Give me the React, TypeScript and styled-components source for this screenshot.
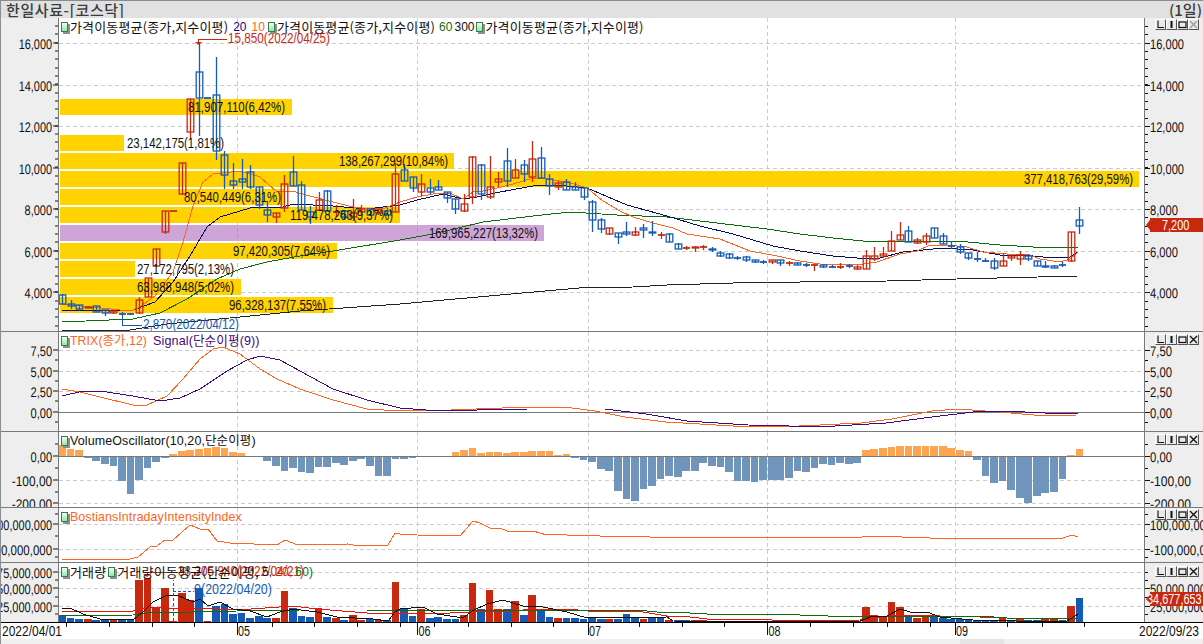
import React from 'react';
import styled, { createGlobalStyle } from 'styled-components';

const RED = '#c8290e';
const BLUE = '#155bb5';
const FIRST_X = 62;
const STEP = 8.55;
const MONTHS = [237, 417.5, 588, 767.5, 955];
const cx = (i: number) => FIRST_X + i * STEP;

// candle data is in page pixels: body top, body bottom, wick top, wick bottom, 1 = red
type Candle = [number, number, number, number, number];
const CANDLES: Candle[] = [
  [296, 305, 295, 305, 0], [305, 307, 301, 310, 0], [306, 310, 306, 312, 0], [308, 309, 308, 309, 1], [307, 313, 307, 313, 0],
  [311, 314, 311, 317, 0], [312, 314, 312, 315, 1], [315, 315, 313, 317, 0], [315, 315, 314, 316, 0], [301, 314, 298, 315, 1],
  [279, 298, 279, 298, 1], [250, 267, 250, 268, 1], [212, 233, 212, 235, 1], [212, 212, 212, 212, 1], [164, 195, 164, 196, 1],
  [100, 133, 100, 140, 1], [73, 99, 44, 137, 0], [99, 99, 99, 99, 0], [96, 152, 58, 161, 0], [156, 176, 152, 190, 0],
  [182, 186, 164, 190, 0], [180, 183, 160, 190, 0], [173, 188, 166, 190, 0], [188, 206, 188, 210, 0], [211, 216, 202, 223, 0],
  [214, 218, 214, 224, 1], [185, 209, 176, 213, 1], [173, 187, 157, 187, 0], [186, 211, 182, 211, 0], [213, 218, 207, 225, 0],
  [201, 211, 193, 211, 1], [192, 212, 191, 212, 0], [213, 213, 206, 218, 1], [212, 218, 212, 220, 0], [214, 218, 200, 222, 1],
  [210, 213, 206, 216, 1], [210, 216, 210, 216, 0], [210, 214, 210, 216, 1], [212, 216, 209, 216, 0], [175, 213, 164, 213, 1],
  [171, 182, 165, 182, 0], [178, 189, 178, 193, 0], [185, 193, 175, 197, 1], [189, 193, 180, 195, 0], [188, 191, 181, 191, 0],
  [193, 199, 193, 204, 0], [200, 210, 200, 215, 0], [205, 212, 195, 213, 1], [158, 198, 157, 205, 1], [166, 195, 165, 201, 0],
  [188, 198, 157, 200, 1], [180, 183, 173, 188, 1], [162, 182, 149, 188, 0], [171, 179, 160, 179, 1], [166, 175, 161, 183, 0],
  [160, 178, 142, 183, 1], [159, 179, 148, 179, 0], [180, 187, 175, 196, 0], [184, 188, 182, 191, 1], [183, 191, 180, 191, 0],
  [188, 191, 183, 191, 0], [189, 198, 189, 201, 0], [203, 221, 201, 233, 0], [221, 230, 219, 234, 0], [229, 235, 229, 236, 1],
  [234, 238, 234, 245, 0], [233, 235, 223, 237, 0], [233, 236, 228, 237, 1], [229, 231, 225, 239, 0], [233, 234, 222, 237, 0],
  [236, 236, 233, 240, 1], [235, 243, 234, 243, 0], [245, 250, 244, 250, 0], [249, 249, 247, 251, 1], [248, 249, 247, 253, 1],
  [248, 248, 246, 251, 1], [250, 251, 248, 253, 0], [254, 257, 252, 258, 0], [255, 259, 254, 260, 0], [259, 259, 257, 261, 0],
  [258, 261, 257, 263, 0], [261, 263, 261, 264, 0], [263, 263, 261, 265, 0], [261, 263, 261, 265, 1], [261, 264, 261, 267, 0],
  [264, 264, 262, 267, 1], [264, 266, 263, 266, 0], [266, 266, 264, 268, 0], [266, 266, 266, 272, 1], [266, 268, 266, 269, 0],
  [268, 268, 266, 269, 0], [268, 268, 264, 270, 1], [267, 267, 265, 269, 0], [268, 270, 266, 271, 1], [257, 270, 251, 270, 1],
  [257, 260, 248, 262, 1], [255, 257, 248, 259, 1], [242, 252, 232, 252, 1], [236, 241, 223, 241, 1], [232, 243, 227, 243, 0],
  [241, 244, 239, 245, 1], [237, 243, 234, 246, 1], [229, 239, 229, 239, 0], [237, 245, 234, 245, 0], [247, 247, 242, 250, 0],
  [248, 253, 245, 255, 0], [254, 259, 254, 261, 0], [260, 260, 253, 263, 0], [262, 262, 259, 263, 0], [262, 269, 259, 271, 0],
  [262, 267, 254, 267, 1], [257, 259, 257, 262, 1], [256, 260, 252, 266, 1], [257, 260, 255, 262, 0], [262, 267, 262, 267, 0],
  [267, 268, 262, 269, 0], [267, 269, 266, 269, 0], [266, 266, 262, 268, 0], [233, 262, 233, 263, 1], [221, 227, 208, 235, 0],
];

const MA5 = '62,305 130,312 138,309 155,297 173,273 183,243 193,207 203,183 213,175 240,172 260,178 277,193 292,192 310,197 333,203 353,208 380,211 395,205 400,203 417,198 433,195 450,194 463,200 473,193 483,192 497,189 513,185 533,179 547,180 567,183 587,189 603,202 620,212 633,218 653,224 673,229 687,235 720,240 750,252 777,257 800,262 820,265 857,266 877,263 900,255 917,252 930,246 947,246 967,248 983,253 1007,255 1027,255 1040,260 1060,263 1070,260 1078,253';
const MA20 = '62,311 133,311 155,303 173,283 190,257 207,228 220,218 240,212 250,209 283,208 293,205 333,207 367,210 400,206 417,201 443,195 463,200 477,198 500,193 533,187 557,186 587,189 627,206 667,217 700,227 733,235 773,247 800,252 833,257 857,259 880,259 903,253 943,249 973,251 1000,256 1033,257 1053,259 1070,258 1078,253';
const MA60 = '62,323 133,320 160,314 187,300 217,280 240,270 267,263 300,257 333,252 400,241 433,235 483,223 533,217 570,213 617,216 667,218 717,224 767,230 800,235 833,239 863,242 957,242 1000,246 1050,249 1078,248';
const MA300 = '62,331 130,331 167,325 240,318 300,312 400,305 500,296 579,289 633,288 667,286 767,283 800,283 887,282 957,280 1078,277';

const TRIX = '62,390 80,393 100,398 133,406 147,406 167,397 183,380 200,360 213,350 223,348 240,355 260,370 277,380 300,390 333,401 367,410 400,412 451,411 528,408 564,408 595,412 625,418 666,423 733,427 799,427 861,424 892,420 932,412 958,410 999,413 1045,417 1076,416';
const SIGNAL = '62,397 83,392 100,392 133,397 160,402 180,399 200,390 227,372 247,361 260,357 280,361 300,372 333,390 367,401 400,409 426,411 477,411 528,410 605,410 646,415 687,422 748,426 789,427 835,427 886,424 932,418 973,413 1004,412 1045,414 1078,415';
const BII = '62,560 130,560 138,558 150,548 157,547 165,541 173,541 190,526 200,530 208,530 217,542 230,544 277,546 285,541 298,546 348,545 353,546 388,546 395,534 400,535 417,536 460,537 473,522 480,524 490,529 500,529 507,532 527,533 533,532 547,536 560,535 567,536 597,536 600,537 647,537 650,538 862,538 863,537 897,537 907,539 922,538 930,539 1063,539 1072,536 1078,538';
const VOL_BLACK = '62,609 70,609 83,615 100,620 133,621 143,613 153,603 167,596 177,596 193,603 200,600 208,607 220,603 233,610 250,612 267,618 280,613 293,610 317,613 337,618 373,620 388,622 395,613 400,610 423,608 437,615 457,618 463,619 472,612 487,605 503,601 523,607 543,608 567,613 587,619 667,618 673,622 800,623 860,622 870,618 887,617 900,610 910,613 927,613 940,618 973,621 1060,623 1067,622 1078,615';
const VOL_RED = '62,612 133,612 137,610 160,608 177,610 200,609 237,611 293,607 317,610 367,614 400,614 450,614 473,613 510,612 537,610 567,610 588,612 637,612 667,617 690,618 707,620 767,620 777,622 860,621 880,618 900,616 980,618 1007,619 1060,620 1078,619';
const VOL_GREEN = '62,617 133,616 147,614 237,612 300,611 367,611 370,612 587,611 647,612 657,613 690,614 707,615 777,615 800,616 828,617 980,617 1007,619 1078,619';

const OSC = [10.7, 7.3, 6.3, -1.5, -4.5, -7.5, -9.5, -25, -37.5, -23.5, -11.5, -5.5, -1.5, 2.3, 5.5, 6.3, 7.3, 8.3, 9.3, 8.3, 4.3, 3.3, -1, 0, -4.5, -10, -14.5, -11.5, -15.5, -16.5, -10.5, -10.5, -6.5, -8.5, -4.5, -2.5, -9.5, -19.5, -19.5, -2.5,
  -2.5, -1.5, 0, 0, 0, 0, 4.3, 6.3, 8.3, 3.3, 4.3, 4.3, 3.3, 4.3, 4.3, 5.3, 5.3, 5.3, 1.3, 2.3, -1.5, -3.5, -5.5, -12.5, -14.5, -34.5, -42.5, -44.5, -32.5, -29.5,
  -22.5, -19.5, -20.5, -14.5, -14.5, -6.5, -9.5, -10.5, -15.5, -24.5, -24.5, -25.5, -23.5, -23.5, -23.5, -21.5, -14.5, -15.5, -11.5, -7.5, -8.5, -6.5, -7.5, -6.5, 6.3, 7.3, 8.3, 9.3, 10.3, 10.3,
  10.3, 10.3, 10.3, 10.3, 8.3, 6.3, 5.3, -3.5, -19.5, -26.5, -24.5, -33.5, -41.5, -46.5, -39.5, -36.5, -35.5, -22.5, 1.3, 7.3];

const VOL = [-7.3, -4.3, -3.3, 3.3, -2.3, -2.6, 2.3, -2.3, -2.3, 42.3, 44.3, 14.3, 34.3, 1.3, 29.3, 22.3, -34.3, 1.3, -16.3, -18.3, -8.3, -9.3, -4.3, -6.3, -4.3, 4.3, 31.3, -14.3, -6.3, -5.3, 14.3, -5.3, 4.3, -2.3, 7.3, 2.3, -3.3, 2.3, -2.3, 40.3,
  -13.3, -6.3, 13.3, -4.3, -5.3, -3.3, -3.3, 7.3, 39.3, -13.3, 32.3, 13.3, -13.3, 21.3, -7.3, 27.3, -12.3, -5.3, 4.3, -4.3, -4.3, -3.3, -5.3, -3.3, 3.3, -3.3, -8.3, -4.3, 3.3, -4.3,
  -4.3, 2.3, -2.3, -2.3, 2.3, 1.6, -1.5, 1, 1, -1, -1, -1, -1, -1.5, 1.5, 1.5, 1.5, -1, 1.5, 1, 1.5, 1, 1.5, 1, 15.3, 7.3, 6.3, 20.3, 15.3, -6.3,
  4.3, 6.3, -6.3, -4.3, -3.3, -3.3, -3.3, -2.3, -2.3, -2.3, 4.3, -2.3, 4.3, -2.3, -2.3, 4.3, 4.3, -2.3, 16.3, -24.3];

const VOLUME_ROWS = [
  { y: 100, end: 292, text: '81,907,110(6,42%)', x: 188 },
  { y: 136, end: 124, text: '23,142,175(1,81%)', x: 127 },
  { y: 154, end: 454, text: '138,267,299(10,84%)', x: 339 },
  { y: 172, end: 1139, text: '377,418,763(29,59%)', x: 1024 },
  { y: 190, end: 284, text: '80,540,449(6,31%)', x: 184 },
  { y: 208, end: 400, text: '119,478,263(9,37%)', x: 290 },
  { y: 226, end: 544, text: '169,965,227(13,32%)', x: 429, peak: true },
  { y: 244, end: 337, text: '97,420,305(7,64%)', x: 233 },
  { y: 262, end: 135, text: '27,172,795(2,13%)', x: 137 },
  { y: 280, end: 241, text: '63,988,948(5,02%)', x: 137 },
  { y: 298, end: 333, text: '96,328,137(7,55%)', x: 229 },
];

// width of a string in the bitmap font of the original chart
const textWidth = (s: string) =>
  [...s].reduce((w, c) => w + (c === ',' || c === '.' ? 4 : c === '(' || c === ')' ? 4 : c === '%' ? 11 : c === '-' ? 7 : 6), 0);

const GlobalStyle = createGlobalStyle`
  html, body { margin: 0; padding: 0; background: #eeeeee; overflow: hidden; }
  #root { width: 1203px; height: 644px; }
`;

const Screen = styled.div`
  width: 1203px;
  height: 644px;
  display: flex;
  flex-direction: column;
  box-sizing: border-box;
  border-left: 1px solid #8a8f94;
  font-family: 'Liberation Sans', 'Noto Sans CJK KR', sans-serif;
  overflow: hidden;
`;

const TitleBar = styled.div`
  height: 18px;
  flex: none;
  box-sizing: border-box;
  border-top: 1px solid #858c93;
  background: #e1e1e1;
  display: flex;
  align-items: center;
  justify-content: space-between;
  padding: 0 1px 0 6px;
  margin-left: -1px;
  color: #3c3c3c;
  font-family: 'Noto Sans CJK KR', sans-serif;
  font-size: 15px;
  font-weight: 500;
  line-height: 17px;
`;

const TitleText = styled.span`
  letter-spacing: 0.6px;
`;

const Pane = styled.div<{ $h: number; $line?: boolean }>`
  height: ${p => p.$h}px;
  flex: none;
  display: flex;
  box-sizing: content-box;
  border-bottom: ${p => (p.$line === false ? 'none' : '1px solid #76797c')};
`;

const SideAxis = styled.div<{ $w: number }>`
  position: relative;
  width: ${p => p.$w}px;
  flex: none;
  background: #eeeeee;
  overflow: hidden;
`;

const Plot = styled.div`
  position: relative;
  width: 1085px;
  flex: none;
  background: #ffffff;
  border-left: 1px solid #76797c;
  border-right: 1px solid #76797c;
  overflow: hidden;
`;

const ChartSvg = styled.svg`
  display: block;
  width: 100%;
  height: 100%;
`;

const AxisLabel = styled.text`
  font-family: 'Liberation Sans', sans-serif;
  font-size: 14px;
  fill: #111111;
`;

const Note = styled.text<{ $color: string }>`
  font-family: 'Liberation Sans', sans-serif;
  font-size: 14px;
  fill: ${p => p.$color};
`;

const Legend = styled.div`
  position: absolute;
  top: 2px;
  left: 1px;
  display: flex;
  align-items: center;
  height: 14px;
  white-space: nowrap;
  font-family: 'Noto Sans CJK KR', sans-serif;
  font-size: 13px;
  line-height: 14px;
`;

const LegendMark = styled.span<{ $gap?: number }>`
  width: 5px;
  height: 8px;
  flex: none;
  margin: 0 2px 0 ${p => (p.$gap ?? 0) + 1}px;
  border: 1px solid #3d7a52;
  background: linear-gradient(180deg, #f1fff1, #8fe8a8);
  box-shadow: 2px 2px 0 #8f8f8f;
`;

const LegendText = styled.span<{ $color?: string; $gap?: number; $track?: number; $size?: number; $latin?: boolean }>`
  color: ${p => p.$color ?? '#111111'};
  margin-left: ${p => p.$gap ?? 0}px;
  letter-spacing: ${p => p.$track ?? 0.15}px;
  font-size: ${p => p.$size ?? 13}px;
  ${p => p.$latin && `font-family: 'Liberation Sans', 'Noto Sans CJK KR', sans-serif;`}
`;

const ButtonRow = styled.div<{ $top: number }>`
  position: absolute;
  top: ${p => p.$top}px;
  right: 4px;
  display: flex;
`;

const PaneButton = styled.span`
  width: 11px;
  height: 11px;
  box-sizing: border-box;
  border: 1px solid;
  border-color: #ffffff #555555 #555555 #ffffff;
  background: #e9e9e9;
  display: flex;
  align-items: center;
  justify-content: center;
`;

const Glyph = styled.svg`
  display: block;
  width: 9px;
  height: 9px;
`;

const PriceTag = styled.div<{ $top: number }>`
  position: absolute;
  left: 5px;
  top: ${p => p.$top}px;
  width: 53px;
  height: 14px;
  background: ${RED};
  color: #ffffff;
  font-size: 14px;
  line-height: 14px;
  white-space: nowrap;
  padding-left: 2px;
  box-sizing: border-box;

  &::before {
    content: '';
    position: absolute;
    left: -4px;
    top: 2px;
    border-style: solid;
    border-width: 5px 4px 5px 0;
    border-color: transparent ${RED} transparent transparent;
  }
`;

const TagValue = styled.span<{ $inset: number }>`
  position: relative;
  display: inline-block;
  margin-left: ${p => p.$inset}px;
  transform: scaleX(0.78);
  transform-origin: left center;
`;

const Footer = styled.div`
  height: 16px;
  flex: none;
  background: #ffffff;
  border-top: 1px solid #000000;
  margin-left: -1px;
`;

const ScrollStrip = styled.div`
  height: 4px;
  flex: 1;
  background: #f0f0f0;
  margin-left: -1px;
  padding-left: 960px;
`;

const ScrollThumb = styled.div`
  width: 44px;
  height: 100%;
  background: #e4e4e4;
`;

function PaneButtons({ top, dim }: { top: number; dim?: boolean }) {
  const stroke = '#111';
  return (
    <ButtonRow $top={top}>
      <PaneButton>
        <Glyph viewBox="0 0 9 9"><path d="M2 0.5V7.5H8" fill="none" stroke={stroke} strokeWidth="1.1" /></Glyph>
      </PaneButton>
      <PaneButton>
        <Glyph viewBox="0 0 9 9"><path d="M4.5 1V8" fill="none" stroke={stroke} strokeWidth="2" /></Glyph>
      </PaneButton>
      <PaneButton>
        <Glyph viewBox="0 0 9 9"><rect x="1" y="2" width="7" height="5.5" fill="none" stroke={stroke} strokeWidth="1.2" /></Glyph>
      </PaneButton>
      <PaneButton>
        <Glyph viewBox="0 0 9 9"><path d="M1 1L8 8M8 1L1 8" fill="none" stroke={dim ? '#9a9a9a' : stroke} strokeWidth="1.3" /></Glyph>
      </PaneButton>
    </ButtonRow>
  );
}

function Axis({ side, top, h, labels, minor }: { side: 'left' | 'right'; top: number; h: number; labels: [number, string][]; minor: number[] }) {
  const left = side === 'left';
  const w = 58;
  const edge = left ? w : 0;
  const dir = left ? -1 : 1;
  return (
    <ChartSvg viewBox={`0 ${top} ${w} ${h}`} preserveAspectRatio="none" shapeRendering="crispEdges">
      {minor.map(y => <line key={y} x1={edge} x2={edge + dir * 3} y1={y} y2={y} stroke="#111" />)}
      {labels.map(([y, t]) => (
        <g key={y}>
          <line x1={edge} x2={edge + dir * 5} y1={y} y2={y} stroke="#111" />
          <AxisLabel
            x={left ? 52 : 5}
            y={y + 5.5}
            textAnchor={left ? 'end' : 'start'}
            textLength={textWidth(t)}
            lengthAdjust="spacingAndGlyphs"
            textRendering="geometricPrecision"
          >
            {t}
          </AxisLabel>
        </g>
      ))}
    </ChartSvg>
  );
}

function Grid({ top, bottom, rows, color = '#cccccc' }: { top: number; bottom: number; rows: number[]; color?: string }) {
  return (
    <g stroke={color} strokeDasharray="4 3" shapeRendering="crispEdges">
      {rows.map(y => <line key={y} x1={59} x2={1144} y1={y} y2={y} />)}
      {MONTHS.map(x => <line key={x} x1={x} x2={x} y1={top} y2={bottom} />)}
    </g>
  );
}

const Curve = ({ points, color }: { points: string; color: string }) => (
  <polyline points={points} fill="none" stroke={color} strokeWidth={1} shapeRendering="crispEdges" />
);

function PriceChart() {
  const rows = [44, 86, 127, 169, 210, 252, 293];
  const plain = VOLUME_ROWS.filter(r => !r.peak);
  const peak = VOLUME_ROWS.filter(r => r.peak);
  return (
    <ChartSvg viewBox="59 19 1085 313" preserveAspectRatio="none">
      <defs>
        <clipPath id="yellow-rows">
          {plain.map(r => <rect key={r.y} x={60} y={r.y} width={r.end - 60} height={16} />)}
        </clipPath>
        <clipPath id="purple-rows">
          {peak.map(r => <rect key={r.y} x={60} y={r.y} width={r.end - 60} height={16} />)}
        </clipPath>
      </defs>
      {VOLUME_ROWS.map(r => (
        <rect key={r.y} x={60} y={r.y} width={r.end - 60} height={16} fill={r.peak ? '#cda5d6' : '#ffd200'} />
      ))}
      <Grid top={19} bottom={332} rows={rows} />
      <g clipPath="url(#yellow-rows)"><Grid top={19} bottom={332} rows={rows} color="#c6ee2a" /></g>
      <g clipPath="url(#purple-rows)"><Grid top={19} bottom={332} rows={rows} color="#f070e0" /></g>
      <Curve points={MA300} color="#222222" />
      <Curve points={MA60} color="#0b6e0b" />
      <Curve points={MA20} color="#0c0c5c" />
      <Curve points={MA5} color="#ff6420" />
      {CANDLES.map(([t, b, wt, wb, red], i) => {
        const x = Math.round(cx(i)) + 0.5;
        const c = red ? RED : BLUE;
        return (
          <g key={i} stroke={c} strokeWidth="1.3" fill="none">
            <line x1={x} x2={x} y1={wt} y2={wb} />
            {t === b
              ? <line x1={x - 3.5} x2={x + 3.5} y1={t} y2={t} strokeWidth="1.8" />
              : <rect x={x - 3.3} y={t} width={6.6} height={b - t} />}
          </g>
        );
      })}
      <path d="M195 43 H202 L198.5 46 Z" fill={RED} />
      <path d="M198.5 44 V40.5 H227" fill="none" stroke={RED} shapeRendering="crispEdges" />
      <Note $color={RED} x={228} y={44} textLength={102} lengthAdjust="spacingAndGlyphs">15,850(2022/04/25)</Note>
      <path d="M122.5 317 V326.5 H142" fill="none" stroke={BLUE} shapeRendering="crispEdges" />
      <Note $color={BLUE} x={143} y={330} textLength={96} lengthAdjust="spacingAndGlyphs">2,870(2022/04/12)</Note>
      {VOLUME_ROWS.map(r => (
        <AxisLabel key={r.y} x={r.x} y={r.y + 13} textLength={textWidth(r.text)} lengthAdjust="spacingAndGlyphs">{r.text}</AxisLabel>
      ))}
    </ChartSvg>
  );
}

function TrixChart() {
  return (
    <ChartSvg viewBox="59 333 1085 99" preserveAspectRatio="none">
      <Grid top={333} bottom={432} rows={[351, 372, 392]} />
      <line x1={59} x2={1144} y1={413.5} y2={413.5} stroke="#76797c" strokeWidth="1" />
      <Curve points={TRIX} color="#ff6420" />
      <Curve points={SIGNAL} color="#3f0a7a" />
    </ChartSvg>
  );
}

function OscillatorChart() {
  return (
    <ChartSvg viewBox="59 433 1085 75" preserveAspectRatio="none" shapeRendering="crispEdges">
      <Grid top={433} bottom={508} rows={[481, 504]} />
      {OSC.map((v, i) => (
        <rect key={i} x={cx(i) - 3.8} y={v > 0 ? 457 - v : 457} width={7.7} height={Math.abs(v)} fill={v > 0 ? '#ffa552' : '#7095bd'} />
      ))}
      <line x1={59} x2={1144} y1={457.5} y2={457.5} stroke="#76797c" />
    </ChartSvg>
  );
}

function IntensityChart() {
  return (
    <ChartSvg viewBox="59 509 1085 54" preserveAspectRatio="none">
      <Grid top={509} bottom={563} rows={[525, 550]} />
      <Curve points={BII} color="#ff6420" />
    </ChartSvg>
  );
}

function VolumeChart() {
  return (
    <ChartSvg viewBox="59 564 1085 59" preserveAspectRatio="none">
      <Grid top={564} bottom={623} rows={[573, 589, 607]} />
      {VOL.map((v, i) => {
        const h = Math.abs(v);
        return <rect key={i} x={cx(i) - 3.8} y={623 - h} width={7.7} height={h} fill={v > 0 ? RED : BLUE} shapeRendering="crispEdges" />;
      })}
      <Curve points={VOL_RED} color="#f01010" />
      <Curve points={VOL_GREEN} color="#0b6e0b" />
      <Curve points={VOL_BLACK} color="#111111" />
      <path d="M143 575 H151 L147 578 Z" fill={RED} />
      <path d="M147 575 V573.5 H178" fill="none" stroke={RED} shapeRendering="crispEdges" />
      <Note $color={RED} x={178} y={577} textLength={126} lengthAdjust="spacingAndGlyphs">33,305,940(2022/04/21)</Note>
      <path d="M173.5 622 V581 M173 592.5 H194" fill="none" stroke={BLUE} strokeDasharray="3 2" shapeRendering="crispEdges" />
      <Note $color={BLUE} x={194} y={595} textLength={78} lengthAdjust="spacingAndGlyphs">0(2022/04/20)</Note>
    </ChartSvg>
  );
}

function DateAxis() {
  const ticks = [66, 109, 152, 194, 272, 314, 357, 400, 434, 468, 511, 553, 639, 682, 724, 810, 853, 887, 930, 1007, 1042, 1084];
  const months: [number, string][] = [[237, '05'], [417.5, '06'], [588, '07'], [767.5, '08'], [955, '09']];
  return (
    <ChartSvg viewBox="0 624 1203 16" preserveAspectRatio="none">
      <g stroke="#111" shapeRendering="crispEdges">
        {ticks.map(x => <line key={x} x1={x} x2={x} y1={624} y2={628} />)}
        {months.map(([x]) => <line key={x} x1={x} x2={x} y1={624} y2={636} />)}
      </g>
      <AxisLabel x={2} y={637} textLength={60} lengthAdjust="spacingAndGlyphs">2022/04/01</AxisLabel>
      {months.map(([x, t]) => <AxisLabel key={t} x={x + 1} y={637} textLength={12} lengthAdjust="spacingAndGlyphs">{t}</AxisLabel>)}
      <AxisLabel x={1139} y={637} textLength={60} lengthAdjust="spacingAndGlyphs">2022/09/23</AxisLabel>
    </ChartSvg>
  );
}

const range = (from: number, to: number, step: number) => {
  const out: number[] = [];
  for (let y = from; y <= to; y += step) out.push(Math.round(y));
  return out;
};

const PRICE_LABELS: [number, string][] = [[44, '16,000'], [86, '14,000'], [127, '12,000'], [169, '10,000'], [210, '8,000'], [252, '6,000'], [293, '4,000']];
const TRIX_LABELS: [number, string][] = [[351, '7,50'], [372, '5,00'], [392, '2,50'], [413, '0,00']];
const OSC_LABELS: [number, string][] = [[457, '0,00'], [481, '-100,00'], [504, '-200,00']];
const BII_LABELS: [number, string][] = [[525, '100,000,000'], [550, '-100,000,000']];
const VOL_LABELS: [number, string][] = [[573, '75,000,000'], [589, '50,000,000'], [607, '25,000,000']];

export default function App() {
  return (
    <Screen>
      <GlobalStyle />
      <TitleBar>
        <TitleText>한일사료-[코스닥]</TitleText>
        <span>(1일)</span>
      </TitleBar>

      <Pane $h={313}>
        <SideAxis $w={57}><Axis side="left" top={19} h={313} labels={PRICE_LABELS} minor={range(27, 327, 8.32)} /></SideAxis>
        <Plot>
          <PriceChart />
          <Legend>
            <LegendMark />
            <LegendText>가격이동평균(종가,지수이평)</LegendText>
            <LegendText $latin $size={12} $track={0} $color="#0c0c7c" $gap={5}>20</LegendText>
            <LegendText $latin $size={12} $track={0} $color="#ff6420" $gap={5}>10</LegendText>
            <LegendMark $gap={2} />
            <LegendText>가격이동평균(종가,지수이평)</LegendText>
            <LegendText $latin $size={12} $track={0} $color="#0b6e0b" $gap={4}>60</LegendText>
            <LegendText $latin $size={12} $track={0} $gap={2}>300</LegendText>
            <LegendMark $gap={1} />
            <LegendText>가격이동평균(종가,지수이평)</LegendText>
          </Legend>
        </Plot>
        <SideAxis $w={58}>
          <Axis side="right" top={19} h={313} labels={PRICE_LABELS} minor={range(27, 327, 8.32)} />
          <PriceTag $top={200}><TagValue $inset={10}>7,200</TagValue></PriceTag>
          <PaneButtons top={1} dim />
        </SideAxis>
      </Pane>

      <Pane $h={99}>
        <SideAxis $w={57}><Axis side="left" top={333} h={99} labels={TRIX_LABELS} minor={[361, 382, 402, 423]} /></SideAxis>
        <Plot>
          <TrixChart />
          <Legend>
            <LegendMark />
            <LegendText $latin $size={12.3} $color="#ff6420" $track={0.1}>TRIX(종가,12)</LegendText>
            <LegendText $latin $size={12.6} $color="#3f0a7a" $gap={6} $track={0.1}>Signal(단순이평(9))</LegendText>
          </Legend>
        </Plot>
        <SideAxis $w={58}>
          <Axis side="right" top={333} h={99} labels={TRIX_LABELS} minor={[361, 382, 402, 423]} />
          <PaneButtons top={2} />
        </SideAxis>
      </Pane>

      <Pane $h={75}>
        <SideAxis $w={57}><Axis side="left" top={433} h={75} labels={OSC_LABELS} minor={[445, 469, 493]} /></SideAxis>
        <Plot>
          <OscillatorChart />
          <Legend>
            <LegendMark />
            <LegendText $latin $size={12.5} $track={0.1}>VolumeOscillator(10,20,단순이평)</LegendText>
          </Legend>
        </Plot>
        <SideAxis $w={58}>
          <Axis side="right" top={433} h={75} labels={OSC_LABELS} minor={[445, 469, 493]} />
          <PaneButtons top={2} />
        </SideAxis>
      </Pane>

      <Pane $h={54}>
        <SideAxis $w={57}><Axis side="left" top={509} h={54} labels={BII_LABELS} minor={[515, 537, 558]} /></SideAxis>
        <Plot>
          <IntensityChart />
          <Legend>
            <LegendMark />
            <LegendText $latin $size={12.4} $color="#ff6420" $track={0.1}>BostiansIntradayIntensityIndex</LegendText>
          </Legend>
        </Plot>
        <SideAxis $w={58}>
          <Axis side="right" top={509} h={54} labels={BII_LABELS} minor={[515, 537, 558]} />
          <PaneButtons top={1} />
        </SideAxis>
      </Pane>

      <Pane $h={59} $line={false}>
        <SideAxis $w={57}><Axis side="left" top={564} h={59} labels={VOL_LABELS} minor={[581, 598, 615]} /></SideAxis>
        <Plot>
          <VolumeChart />
          <Legend>
            <LegendMark />
            <LegendText>거래량</LegendText>
            <LegendMark $gap={1} />
            <LegendText>거래량이동평균(단순이평,</LegendText>
            <LegendText $latin $size={12} $gap={3}>5,</LegendText>
            <LegendText $latin $size={12} $color="#c8290e" $gap={3}>20,</LegendText>
            <LegendText $latin $size={12} $color="#0b6e0b" $gap={3}>60)</LegendText>
          </Legend>
        </Plot>
        <SideAxis $w={58}>
          <Axis side="right" top={564} h={59} labels={VOL_LABELS.slice(1)} minor={[573, 581, 598, 615]} />
          <PriceTag $top={29}><TagValue $inset={-5}>34,677,653</TagValue></PriceTag>
          <PaneButtons top={3} />
        </SideAxis>
      </Pane>

      <Footer><DateAxis /></Footer>
      <ScrollStrip><ScrollThumb /></ScrollStrip>
    </Screen>
  );
}
